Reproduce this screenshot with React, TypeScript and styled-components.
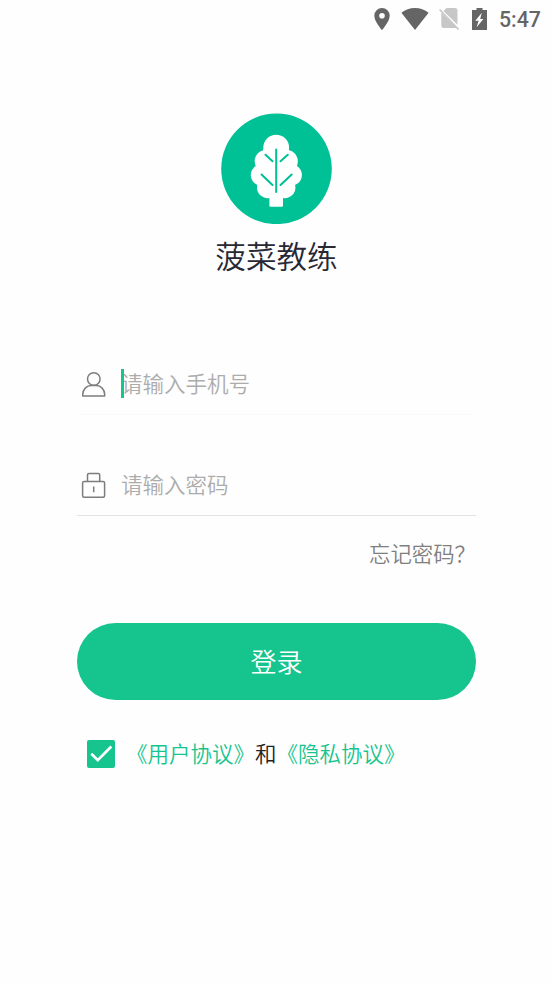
import React, { useState } from "react";
import styled, { createGlobalStyle } from "styled-components";

const GlobalStyle = createGlobalStyle`
  *, *::before, *::after { box-sizing: border-box; }
  body {
    margin: 0;
    background: #fefefe;
    font-family: "Noto Sans CJK SC", sans-serif;
    font-weight: 350;
  }
  svg { display: block; flex: none; }
`;

const Screen = styled.div`
  display: flex;
  flex-direction: column;
  height: 983px;
  width: 553px;
  overflow: hidden;
`;

const StatusBar = styled.header`
  display: flex;
  align-items: center;
  justify-content: flex-end;
  height: 38px;
  padding-right: 12px;
  color: #656565;
`;

const Clock = styled.time`
  width: 42px;
  margin-left: 12px;
  padding-top: 1px;
  font: 500 21.3px/38px Roboto, sans-serif;
  white-space: nowrap;
`;

const StatusIcon = styled.svg<{ $gap?: number }>`
  margin-left: ${(p) => p.$gap ?? 0}px;
`;

const Brand = styled.div`
  display: flex;
  flex-direction: column;
  align-items: center;
  padding-top: 75px;
`;

const BrandName = styled.h1`
  margin: 8px 0 0;
  font-size: 30.6px;
  font-weight: 350;
  line-height: 46px;
  color: #282835;
`;

const Form = styled.form`
  display: flex;
  flex-direction: column;
  width: 399px;
  margin: 76px 0 0 77px;
`;

const Field = styled.label<{ $line: string; $gap?: number }>`
  display: flex;
  align-items: center;
  height: 61px;
  margin-top: ${(p) => p.$gap ?? 0}px;
  padding: 0 0 1px 4px;
  border-bottom: 1px solid ${(p) => p.$line};
`;

const InputArea = styled.div`
  position: relative;
  flex: 1;
  margin-left: 15px;
`;

const Input = styled.input`
  display: block;
  width: 100%;
  height: 32px;
  padding: 0 0 2px;
  border: 0;
  outline: 0;
  background: transparent;
  font: 350 21.5px/30px "Noto Sans CJK SC", sans-serif;
  color: #333;
  &::placeholder { color: #acacac; opacity: 1; }
`;

const Caret = styled.span`
  position: absolute;
  left: 0;
  top: 1px;
  width: 3px;
  height: 29px;
  background: #15c58d;
`;

const Forgot = styled.a`
  align-self: flex-end;
  margin: 21px 0 0 0;
  font-size: 21.4px;
  line-height: 32px;
  color: #7f7f7f;
`;

const Submit = styled.button`
  height: 77px;
  margin-top: 54px;
  padding: 0 0 1px;
  border: 0;
  border-radius: 39px;
  background: #15c58d;
  font: 350 26px/38px "Noto Sans CJK SC", sans-serif;
  color: #fff;
`;

const Agreement = styled.div`
  display: flex;
  align-items: center;
  height: 32px;
  margin: 38px 0 0 10px;
  font-size: 21.5px;
  line-height: 32px;
  color: #222;
  white-space: nowrap;
`;

const AgreementText = styled.span`
  margin-top: -2px;
`;

const CheckBox = styled.button`
  width: 28px;
  height: 28px;
  margin-right: 11px;
  padding: 0;
  border: 0;
  border-radius: 2px;
  background: #15c58d;
`;

const Policy = styled.a`
  color: #15c58d;
`;

const LocationIcon = () => (
  <StatusIcon width="16" height="22" viewBox="0 0 16 22">
    <path fill="currentColor" fillRule="evenodd" d="M8 0a7.7 7.7 0 0 0-7.7 7.7C.3 13.500 8 22 8 22s7.700-8.500 7.700-14.300A7.700 7.700 0 0 0 8 0Zm0 5a2.800 2.800 0 1 1 0 5.600A2.800 2.800 0 0 1 8 5Z" />
  </StatusIcon>
);

const WifiIcon = () => (
  <StatusIcon $gap={11} width="28" height="22" viewBox="0 0 28 22">
    <path fill="currentColor" d="M.4 4.800C4.200 1.700 8.800 0 14 0s9.800 1.700 13.600 4.800L14 22Z" />
  </StatusIcon>
);

const NoSimIcon = () => (
  <StatusIcon $gap={10} width="20" height="22" viewBox="0 0 20 22">
    <path fill="#c7c7c7" d="M4.500 3 7.500 0H16q2.500 0 2.500 2.500v14.200ZM2.300 4.800 17.700 20H4.500q-2.200 0-2.200-2.200Z" />
    <path stroke="#c7c7c7" strokeWidth="1.700" d="m.6 1.500 19 20" />
  </StatusIcon>
);

const BatteryIcon = () => (
  <StatusIcon $gap={13} width="15" height="22" viewBox="0 0 15 22">
    <path fill="currentColor" fillRule="evenodd" d="M4.500 0h6v2H15v20H0V2h4.500ZM9.800 4.800l-6.500 8h3.300l-2 6.500 6.800-8.300H8.200Z" />
  </StatusIcon>
);

const Logo = () => (
  <svg width="111" height="111" viewBox="0 0 111 111">
    <circle cx="55.500" cy="55.800" r="55.300" fill="#00c096" />
    <g fill="#fff">
      <circle cx="55.200" cy="34.600" r="12.900" />
      <circle cx="45" cy="48.300" r="11.300" />
      <circle cx="65.500" cy="48.300" r="11.300" />
      <circle cx="40.500" cy="62" r="10.700" />
      <circle cx="70.200" cy="62" r="10.700" />
      <circle cx="46.700" cy="74.500" r="10.700" />
      <circle cx="63.700" cy="74.500" r="10.700" />
      <path d="M42 36h26v46H42Z" />
      <rect x="48.400" y="78" width="13.600" height="15.800" rx="1.200" />
    </g>
    <path fill="none" stroke="#00c096" strokeWidth="2" strokeLinecap="round" d="M55.200 36.500v42.500M44.500 41.700l7 6.600M66.800 41.700l-7.300 6.600M40.500 61.500l11 10.500M70.700 61.500l-11.200 10.500" />
  </svg>
);

const UserIcon = () => (
  <svg width="25" height="26" viewBox="0 0 25 26" fill="none" stroke="#7d7d7d" strokeWidth="1.500">
    <circle cx="12.800" cy="8" r="6.300" />
    <path strokeLinejoin="round" d="M1.700 25v-1.500c0-5 4-9 8.300-9h5.400c4.300 0 8.300 4 8.300 9V25Z" />
  </svg>
);

const LockIcon = () => (
  <svg width="25" height="26" viewBox="0 0 25 26" fill="none" stroke="#7d7d7d" strokeWidth="1.500">
    <rect x="1.600" y="9.500" width="22" height="15.700" rx="1.500" />
    <path d="M6.500 9.500V3q0-1.500 1.500-1.500h9.200q1.500 0 1.500 1.500v6.500M12.700 14.500v5.800" />
  </svg>
);

const CheckIcon = () => (
  <svg width="28" height="28" viewBox="0 0 28 28">
    <path fill="none" stroke="#fff" strokeWidth="2.700" d="m4.300 13.800 6.500 6.400L24.300 6.500" />
  </svg>
);

const PolicyLink = ({ name }: { name: string }) => <Policy>《{name}》</Policy>;

export default function App() {
  const [agreed, setAgreed] = useState(true);
  const [phone, setPhone] = useState("");

  return (
    <Screen>
      <GlobalStyle />
      <StatusBar>
        <LocationIcon />
        <WifiIcon />
        <NoSimIcon />
        <BatteryIcon />
        <Clock>5:47</Clock>
      </StatusBar>
      <Brand>
        <Logo />
        <BrandName>菠菜教练</BrandName>
      </Brand>
      <Form onSubmit={(e) => e.preventDefault()}>
        <Field $line="#fafafa">
          <UserIcon />
          <InputArea>
            {phone === "" && <Caret />}
            <Input placeholder="请输入手机号" value={phone} onChange={(e) => setPhone(e.target.value)} />
          </InputArea>
        </Field>
        <Field $line="#e3e3e3" $gap={40}>
          <LockIcon />
          <InputArea>
            <Input type="password" placeholder="请输入密码" />
          </InputArea>
        </Field>
        <Forgot>忘记密码？</Forgot>
        <Submit type="submit">登录</Submit>
        <Agreement>
          <CheckBox type="button" aria-label="同意协议" onClick={() => setAgreed(!agreed)}>
            {agreed && <CheckIcon />}
          </CheckBox>
          <AgreementText>
            <PolicyLink name="用户协议" />和<PolicyLink name="隐私协议" />
          </AgreementText>
        </Agreement>
      </Form>
    </Screen>
  );
}
